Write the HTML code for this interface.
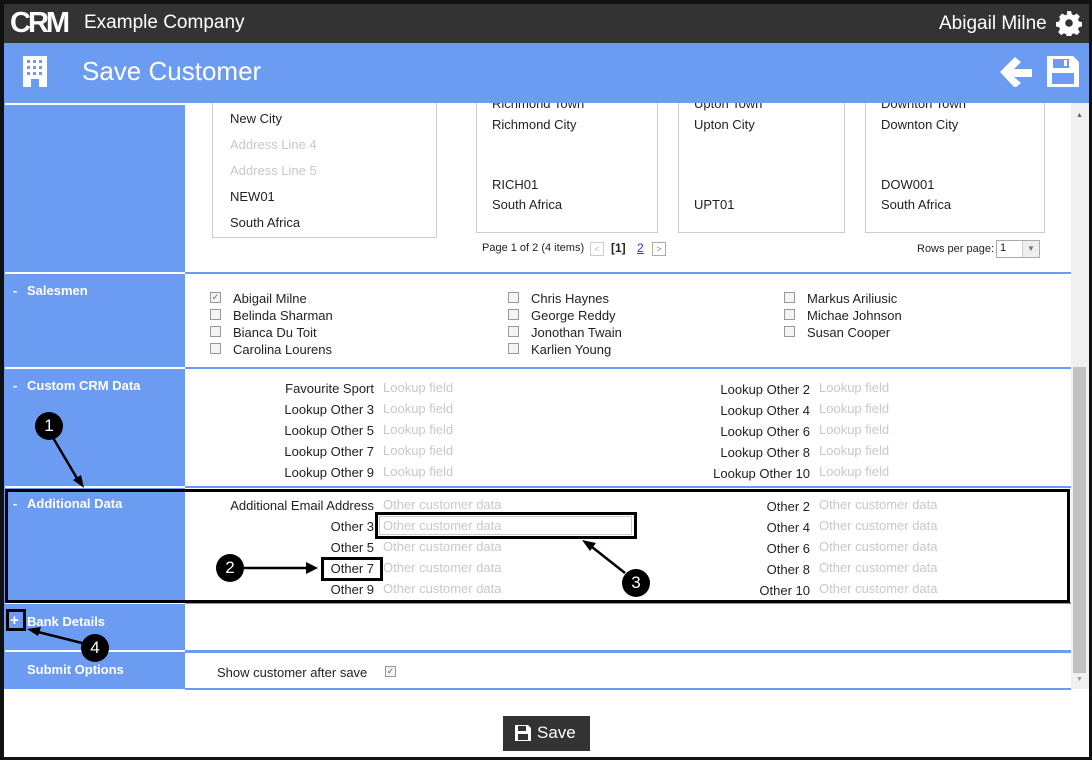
<!DOCTYPE html>
<html><head><meta charset="utf-8">
<style>
*{margin:0;padding:0;box-sizing:border-box}
body{width:1092px;height:760px;position:relative;overflow:hidden;background:#fff;font-family:"Liberation Sans",Tahoma,sans-serif;font-size:13px;color:#222}
.a{position:absolute;white-space:nowrap}
.blue{background:#6c9bf2}
.sh{color:#fff;font-weight:bold;font-size:13px}
.g{color:#c8c8c8}
.r{text-align:right}
.cb{position:absolute;width:11px;height:11px;border:1px solid #999;background:#f4f4f4}
.card{position:absolute;border:1px solid #ccc;border-top:none;background:#fff}
.hl{position:absolute;left:185px;width:886px;height:2px;background:#6c9bf2}
.sl{position:absolute;left:5px;width:180px;height:2px;background:#fff}
.circ{position:absolute;width:28px;height:28px;border-radius:50%;background:#000;color:#fff;font-size:17px;text-align:center;line-height:28px}
</style></head><body>
<div class="a" style="left:0;top:0;width:1092px;height:760px;border:4px solid #111;border-bottom:3px solid #111;border-right:3px solid #111"></div>
<div class="a" style="left:4px;top:4px;width:1085px;height:39px;background:#333"></div>
<div class="a" style="left:10px;top:8px;color:#fff;font-weight:bold;font-size:29px;letter-spacing:-3px;line-height:30px">CRM</div>
<div class="a" style="left:84px;top:12px;color:#fff;font-size:19px">Example Company</div>
<div class="a" style="left:939px;top:13px;color:#fff;font-size:19px">Abigail Milne</div>
<svg class="a" style="left:1056px;top:10px" width="26" height="26" viewBox="0 0 24 24"><path fill="#fff" d="M10 1h4l.6 3 2 .9 2.6-1.7 2.8 2.8-1.7 2.6.9 2 3 .6v4l-3 .6-.9 2 1.7 2.6-2.8 2.8-2.6-1.7-2 .9-.6 3h-4l-.6-3-2-.9-2.6 1.7-2.8-2.8 1.7-2.6-.9-2-3-.6v-4l3-.6.9-2L3 6l2.8-2.8 2.6 1.7 2-.9z"/><circle cx="12" cy="12" r="3.5" fill="#333"/></svg>
<div class="a blue" style="left:4px;top:43px;width:1085px;height:60px"></div>
<svg class="a" style="left:23px;top:56px" width="24" height="31" viewBox="0 0 24 31"><rect width="24" height="31" fill="#fff"/><g fill="#6c9bf2"><rect x="4" y="4" width="3" height="3"/><rect x="10" y="4" width="3" height="3"/><rect x="16" y="4" width="3" height="3"/><rect x="4" y="10" width="3" height="3"/><rect x="10" y="10" width="3" height="3"/><rect x="16" y="10" width="3" height="3"/><rect x="4" y="16" width="3" height="3"/><rect x="10" y="16" width="3" height="3"/><rect x="16" y="16" width="3" height="3"/><rect x="8" y="23" width="8" height="8"/></g></svg>
<div class="a" style="left:82px;top:56px;color:#fff;font-size:26px">Save Customer</div>
<svg class="a" style="left:1000px;top:57px" width="32" height="30" viewBox="0 0 32 30"><path fill="#fff" d="M15 0l6 5-7 7h18v8H14l7 6-6 5L0 15z"/></svg>
<svg class="a" style="left:1047px;top:56px" width="32" height="31" viewBox="0 0 32 31"><path fill="#fff" d="M0 0h26l6 6v25H0z"/><rect x="6" y="3" width="16" height="9" fill="#6c9bf2"/><rect x="17" y="4" width="3" height="6" fill="#fff"/><rect x="5" y="17" width="22" height="11" fill="#6c9bf2"/></svg>
<div class="a blue" style="left:4px;top:103px;width:181px;height:586px"></div>
<div class="sl" style="top:103px"></div>
<div class="sl" style="top:272px"></div>
<div class="sl" style="top:367px"></div>
<div class="sl" style="top:486px"></div>
<div class="sl" style="top:602px"></div>
<div class="sl" style="top:650px"></div>
<div class="hl" style="top:272px"></div>
<div class="hl" style="top:367px"></div>
<div class="hl" style="top:486px"></div>
<div class="hl" style="top:602px"></div>
<div class="hl" style="top:650px;height:3px"></div>
<div class="hl" style="top:688px"></div>
<div class="a" style="left:1071px;top:103px;width:18px;height:586px;background:#f0f0f0"></div>
<div class="a" style="left:1073px;top:367px;width:13px;height:306px;background:#c1c1c1"></div>
<div class="a" style="left:1076px;top:112px;font-size:7px;color:#666">▲</div>
<div class="a" style="left:1076px;top:676px;font-size:7px;color:#999">▼</div>
<div class="card" style="left:212px;top:103px;width:225px;height:135px"></div>
<div class="a" style="left:230px;top:111px">New City</div>
<div class="a g" style="left:230px;top:137px">Address Line 4</div>
<div class="a g" style="left:230px;top:163px">Address Line 5</div>
<div class="a" style="left:230px;top:189px">NEW01</div>
<div class="a" style="left:230px;top:215px">South Africa</div>
<div class="card" style="left:476px;top:103px;width:182px;height:130px"></div>
<div class="a" style="left:492px;top:96px;clip-path:inset(7px 0 0 0)">Richmond Town</div>
<div class="a" style="left:492px;top:117px">Richmond City</div>
<div class="a" style="left:492px;top:177px">RICH01</div>
<div class="a" style="left:492px;top:197px">South Africa</div>
<div class="card" style="left:678px;top:103px;width:167px;height:130px"></div>
<div class="a" style="left:694px;top:96px;clip-path:inset(7px 0 0 0)">Upton Town</div>
<div class="a" style="left:694px;top:117px">Upton City</div>
<div class="a" style="left:694px;top:197px">UPT01</div>
<div class="card" style="left:865px;top:103px;width:180px;height:130px"></div>
<div class="a" style="left:881px;top:96px;clip-path:inset(7px 0 0 0)">Downton Town</div>
<div class="a" style="left:881px;top:117px">Downton City</div>
<div class="a" style="left:881px;top:177px">DOW001</div>
<div class="a" style="left:881px;top:197px">South Africa</div>
<div class="a" style="left:482px;top:242px;font-size:11px">Page 1 of 2 (4 items)</div>
<div class="a" style="left:590px;top:242px;width:14px;height:14px;border:1px solid #ccc;font-size:9px;color:#bbb;text-align:center;line-height:12px">&lt;</div>
<div class="a" style="left:611px;top:241px;font-size:12px;font-weight:bold">[1]</div>
<div class="a" style="left:637px;top:241px;font-size:12px;color:#33c;text-decoration:underline">2</div>
<div class="a" style="left:652px;top:242px;width:14px;height:14px;border:1px solid #aaa;font-size:9px;color:#888;text-align:center;line-height:12px">&gt;</div>
<div class="a" style="left:917px;top:243px;font-size:11px">Rows per page:</div>
<div class="a" style="left:996px;top:240px;width:44px;height:18px;border:1px solid #aaa;font-size:11px;padding:1px 3px">1</div>
<div class="a" style="left:1022px;top:241px;width:17px;height:16px;background:#eee;border-left:1px solid #ccc;font-size:8px;color:#777;text-align:center;line-height:16px">▼</div>
<div class="a sh" style="left:13px;top:283px">-</div><div class="a sh" style="left:27px;top:283px">Salesmen</div>
<div class="cb" style="left:210px;top:292px;font-size:9px;line-height:9px;color:#666;text-align:center">✓</div>
<div class="a" style="left:233px;top:291px">Abigail Milne</div>
<div class="cb" style="left:210px;top:309px"></div><div class="a" style="left:233px;top:308px">Belinda Sharman</div>
<div class="cb" style="left:210px;top:326px"></div><div class="a" style="left:233px;top:325px">Bianca Du Toit</div>
<div class="cb" style="left:210px;top:343px"></div><div class="a" style="left:233px;top:342px">Carolina Lourens</div>
<div class="cb" style="left:508px;top:292px"></div><div class="a" style="left:531px;top:291px">Chris Haynes</div>
<div class="cb" style="left:508px;top:309px"></div><div class="a" style="left:531px;top:308px">George Reddy</div>
<div class="cb" style="left:508px;top:326px"></div><div class="a" style="left:531px;top:325px">Jonothan Twain</div>
<div class="cb" style="left:508px;top:343px"></div><div class="a" style="left:531px;top:342px">Karlien Young</div>
<div class="cb" style="left:784px;top:292px"></div><div class="a" style="left:807px;top:291px">Markus Ariliusic</div>
<div class="cb" style="left:784px;top:309px"></div><div class="a" style="left:807px;top:308px">Michae Johnson</div>
<div class="cb" style="left:784px;top:326px"></div><div class="a" style="left:807px;top:325px">Susan Cooper</div>
<div class="a sh" style="left:13px;top:378px">-</div><div class="a sh" style="left:27px;top:378px">Custom CRM Data</div>
<div class="a r" style="left:200px;width:174px;top:381px">Favourite Sport</div>
<div class="a r" style="left:200px;width:174px;top:402px">Lookup Other 3</div>
<div class="a r" style="left:200px;width:174px;top:423px">Lookup Other 5</div>
<div class="a r" style="left:200px;width:174px;top:444px">Lookup Other 7</div>
<div class="a r" style="left:200px;width:174px;top:465px">Lookup Other 9</div>
<div class="a g" style="left:383px;top:380px">Lookup field</div>
<div class="a g" style="left:383px;top:401px">Lookup field</div>
<div class="a g" style="left:383px;top:422px">Lookup field</div>
<div class="a g" style="left:383px;top:443px">Lookup field</div>
<div class="a g" style="left:383px;top:464px">Lookup field</div>
<div class="a r" style="left:640px;width:170px;top:382px">Lookup Other 2</div>
<div class="a r" style="left:640px;width:170px;top:403px">Lookup Other 4</div>
<div class="a r" style="left:640px;width:170px;top:424px">Lookup Other 6</div>
<div class="a r" style="left:640px;width:170px;top:445px">Lookup Other 8</div>
<div class="a r" style="left:640px;width:170px;top:466px">Lookup Other 10</div>
<div class="a g" style="left:819px;top:380px">Lookup field</div>
<div class="a g" style="left:819px;top:401px">Lookup field</div>
<div class="a g" style="left:819px;top:422px">Lookup field</div>
<div class="a g" style="left:819px;top:443px">Lookup field</div>
<div class="a g" style="left:819px;top:464px">Lookup field</div>
<div class="a sh" style="left:13px;top:496px">-</div><div class="a sh" style="left:27px;top:496px">Additional Data</div>
<div class="a r" style="left:200px;width:174px;top:498px">Additional Email Address</div>
<div class="a r" style="left:200px;width:174px;top:519px">Other 3</div>
<div class="a r" style="left:200px;width:174px;top:540px">Other 5</div>
<div class="a r" style="left:200px;width:174px;top:561px">Other 7</div>
<div class="a r" style="left:200px;width:174px;top:582px">Other 9</div>
<div class="a g" style="left:383px;top:497px">Other customer data</div>
<div class="a" style="left:379px;top:516px;width:253px;height:19px;border:1px solid #ccc"></div>
<div class="a g" style="left:383px;top:518px">Other customer data</div>
<div class="a g" style="left:383px;top:539px">Other customer data</div>
<div class="a g" style="left:383px;top:560px">Other customer data</div>
<div class="a g" style="left:383px;top:581px">Other customer data</div>
<div class="a r" style="left:640px;width:170px;top:499px">Other 2</div>
<div class="a r" style="left:640px;width:170px;top:520px">Other 4</div>
<div class="a r" style="left:640px;width:170px;top:541px">Other 6</div>
<div class="a r" style="left:640px;width:170px;top:562px">Other 8</div>
<div class="a r" style="left:640px;width:170px;top:583px">Other 10</div>
<div class="a g" style="left:819px;top:497px">Other customer data</div>
<div class="a g" style="left:819px;top:518px">Other customer data</div>
<div class="a g" style="left:819px;top:539px">Other customer data</div>
<div class="a g" style="left:819px;top:560px">Other customer data</div>
<div class="a g" style="left:819px;top:581px">Other customer data</div>
<div class="a sh" style="left:10px;top:612px;font-size:15px">+</div>
<div class="a sh" style="left:27px;top:614px">Bank Details</div>
<div class="a sh" style="left:27px;top:662px">Submit Options</div>
<div class="a" style="left:217px;top:665px">Show customer after save</div>
<div class="cb" style="left:385px;top:666px;font-size:9px;line-height:9px;color:#666;text-align:center">✓</div>
<div class="a" style="left:503px;top:716px;width:87px;height:35px;background:#333"></div>
<svg class="a" style="left:515px;top:725px" width="16" height="16" viewBox="0 0 16 16"><path fill="#fff" d="M0 0h13l3 3v13H0z"/><rect x="3" y="1" width="8" height="5" fill="#333"/><rect x="3" y="9" width="10" height="6" fill="#333"/></svg>
<div class="a" style="left:537px;top:723px;color:#fff;font-size:17px">Save</div>
<div class="a" style="left:5px;top:489px;width:1065px;height:114px;border:3px solid #000"></div>
<div class="a" style="left:375px;top:512px;width:262px;height:27px;border:3px solid #000"></div>
<div class="a" style="left:321px;top:557px;width:62px;height:24px;border:3px solid #000"></div>
<div class="a" style="left:6px;top:609px;width:20px;height:22px;border:3px solid #000"></div>
<svg class="a" style="left:0;top:0" width="1092" height="760">
<g stroke="#000" stroke-width="2.5" fill="none"><line x1="52" y1="436" x2="78" y2="480"/><line x1="244" y1="568" x2="306" y2="568"/><line x1="625" y1="573" x2="592" y2="547"/><line x1="82" y1="643" x2="38" y2="632"/></g>
<g fill="#000"><path d="M84 488l-11-8 8-5z"/><path d="M318 568l-12-6v12z"/><path d="M582 540l14 3-6 8z"/><path d="M27 629l14-2-3 9z"/></g>
</svg>
<div class="circ" style="left:35px;top:412px">1</div>
<div class="circ" style="left:216px;top:554px">2</div>
<div class="circ" style="left:622px;top:569px">3</div>
<div class="circ" style="left:81px;top:634px">4</div>
</body></html>
